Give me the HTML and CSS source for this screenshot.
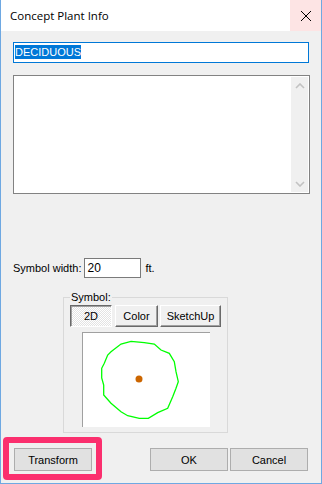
FILE: index.html
```html
<!DOCTYPE html>
<html>
<head>
    <title>Concept Plant Info</title>
    <link rel="stylesheet" href="styles.css">
</head>
<body>
    <div class="window">
        <div class="titlebar">
            <span class="title">Concept Plant Info</span>
            <span class="close">
                <svg width="12" height="12" viewBox="0 0 12 12">
                    <path d="M1 1 L11 11 M11 1 L1 11" stroke="#000" stroke-width="1" fill="none"/>
                </svg>
            </span>
        </div>
        <div class="content">
            <div class="name-field"><span class="selected">DECIDUOUS</span></div>

            <div class="notes">
                <div class="scrollbar">
                    <svg width="10" height="6" viewBox="0 0 10 6">
                        <path d="M1 5 L5 1 L9 5" stroke="#c2c2c2" stroke-width="1.6" fill="none"/>
                    </svg>
                    <svg width="10" height="6" viewBox="0 0 10 6">
                        <path d="M1 1 L5 5 L9 1" stroke="#c2c2c2" stroke-width="1.6" fill="none"/>
                    </svg>
                </div>
            </div>

            <div class="width-row">
                <span class="label">Symbol width:</span>
                <div class="small-field">20</div>
                <span class="label">ft.</span>
            </div>

            <fieldset class="symbol-group">
                <legend>Symbol:</legend>
                <div class="tabs">
                    <button class="classic pressed tab-2d">2D</button>
                    <button class="classic tab-color">Color</button>
                    <button class="classic tab-sketchup">SketchUp</button>
                </div>
                <div class="preview">
                    <svg width="128" height="95" viewBox="0 0 128 95">
                        <path d="M49 9.3 L62.3 10.7 L72.3 12 L79 18 L87.3 21.3 L92.3 29.7 L94 39.7 L96.3 49.7 L94 56.3 L90.7 64.7 L85.7 76.3 L75.7 80.7 L66.3 86.3 L57.3 86.3 L45.7 83.7 L39 79.7 L29 71.3 L21.7 63 L21.7 53 L19.7 46 L19.7 36.3 L22.3 31.3 L25.7 23 L29 19.7 L39 12 Z"
                              stroke="#00ff00" stroke-width="1.3" fill="none"/>
                        <circle cx="57" cy="47" r="3.5" fill="#cc6600"/>
                    </svg>
                </div>
            </fieldset>

            <div class="footer">
                <div class="highlight-wrap">
                    <button class="btn">Transform</button>
                    <span class="highlight"></span>
                </div>
                <div class="footer-right">
                    <button class="btn">OK</button>
                    <button class="btn">Cancel</button>
                </div>
            </div>
        </div>
    </div>
</body>
</html>
```

FILE: styles.css
```css
/* Dialog window */
body {
    margin: 0;
    background-color: #f0f0f0;
    font-family: "Liberation Sans", Arial, sans-serif;
    font-size: 11px;
    color: #000;
}

.window {
    width: 322px;
    height: 484px;
    box-sizing: border-box;
    border: 1px solid #6ea8e2;
    border-top: none;
    background-color: #f0f0f0;
}

.titlebar {
    height: 31px;
    background-color: #fff;
    display: flex;
    align-items: center;
    justify-content: space-between;
}

.title {
    font-family: "Open Sans", sans-serif;
    font-size: 11.5px;
    padding-left: 9px;
    padding-bottom: 1px;
}

.close {
    width: 31px;
    height: 31px;
    background-color: #fde4e4;
    display: flex;
    align-items: center;
    justify-content: center;
}

.content {
    padding: 0 12px;
}

.name-field {
    margin-top: 11px;
    width: 296px;
    height: 21px;
    box-sizing: border-box;
    border: 1px solid #0078d7;
    background-color: #fff;
    padding: 2px 0 0 1px;
    line-height: 14px;
}

.selected {
    background-color: #0078d7;
    color: #fff;
    padding: 1px 0;
}

.notes {
    margin-top: 12px;
    width: 297px;
    height: 119px;
    box-sizing: border-box;
    border: 1px solid #828282;
    background-color: #fff;
    display: flex;
    justify-content: flex-end;
    padding: 1px;
}

.scrollbar {
    width: 17px;
    background-color: #f0f0f0;
    display: flex;
    flex-direction: column;
    justify-content: space-between;
    align-items: center;
    padding: 6px 0 5px;
    box-sizing: border-box;
}

.width-row {
    margin-top: 64px;
    display: flex;
    align-items: center;
    height: 20px;
}

.small-field {
    width: 57px;
    height: 20px;
    box-sizing: border-box;
    border: 1px solid #7a7a7a;
    background-color: #fff;
    margin: 0 4px 0 3px;
    padding: 2px 0 0 2px;
    line-height: 14px;
    font-size: 12px;
}

.label {
    font-size: 11px;
}

/* Symbol group */
.symbol-group {
    margin: 13px 0 0 50px;
    width: 164px;
    height: 142px;
    box-sizing: border-box;
    border: 1px solid #d9d9d9;
    padding: 0 6px 0 6px;
}

.symbol-group legend {
    padding: 0 1px;
    line-height: 13px;
    font-size: 11px;
}

.tabs {
    display: flex;
    margin-top: 1px;
}

.classic {
    height: 22px;
    box-sizing: border-box;
    font-family: "Liberation Sans", Arial, sans-serif;
    font-size: 11px;
    padding: 0;
    background-color: #f0f0f0;
    border: 1px solid;
    border-color: #fff #696969 #696969 #fff;
    box-shadow: inset -1px -1px 0 #a0a0a0;
}

.classic.pressed {
    border-color: #696969 #fff #fff #696969;
    box-shadow: inset 1px 1px 0 #a0a0a0;
    background-color: #f7f7f7;
    background-image: repeating-conic-gradient(#fff 0 25%, #e3e3e3 0 50%);
    background-size: 2px 2px;
}

.tab-2d {
    width: 42px;
}

.tab-color {
    width: 43px;
    margin-left: 3px;
}

.tab-sketchup {
    width: 61px;
    margin-left: 2px;
}

.preview {
    width: 128px;
    height: 95px;
    margin: 5px auto 0;
    background-color: #fff;
    border-top: 1px solid #a0a0a0;
    border-left: 1px solid #a0a0a0;
    box-sizing: border-box;
}

.preview svg {
    display: block;
    margin: -1px 0 0 -1px;
}

/* Bottom buttons */
.footer {
    margin-top: 15px;
    display: flex;
    justify-content: space-between;
}

.btn {
    width: 78px;
    height: 23px;
    box-sizing: border-box;
    background-color: #e1e1e1;
    border: 1px solid #adadad;
    font-family: "Liberation Sans", Arial, sans-serif;
    font-size: 11px;
    padding: 0;
}

.highlight-wrap {
    position: relative;
    margin-left: 1px;
}

.highlight-wrap .btn {
    display: block;
}

.highlight {
    position: absolute;
    left: -11px;
    top: -11px;
    width: 99px;
    height: 43px;
    box-sizing: border-box;
    border: 6px solid #fb2f6e;
    border-radius: 4px;
}

.footer-right {
    display: flex;
    gap: 2px;
    margin-right: 1px;
}
```
